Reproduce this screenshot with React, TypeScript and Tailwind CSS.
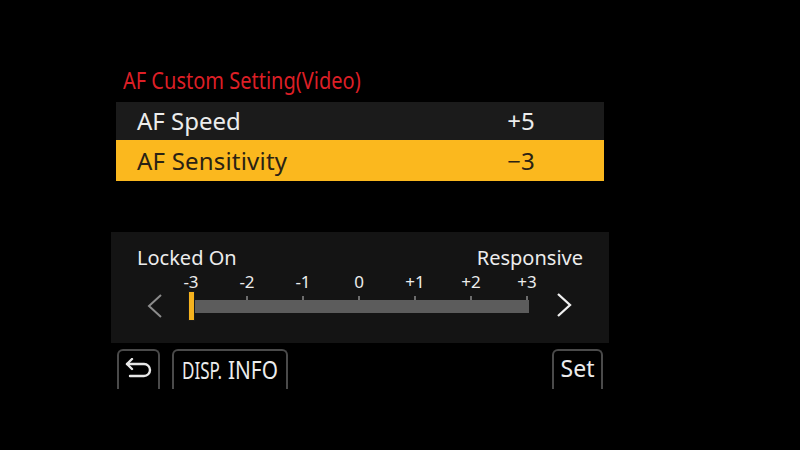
const TICKS = ["-3", "-2", "-1", "0", "+1", "+2", "+3"];

function BackIcon() {
  return (
    <svg viewBox="0 0 30 26" className="mt-[2px] h-[26px] w-[30px]" fill="none" stroke="#e8e8e8" strokeWidth={2.4}>
      <path d="M3 6h17a6 6 0 0 1 0 12H6" strokeLinecap="round" strokeLinejoin="round" />
      <path d="M8 1 3 6l5 5" strokeLinecap="round" strokeLinejoin="round" />
    </svg>
  );
}

function Scale() {
  return (
    <svg viewBox="0 0 350 30" className="h-[30px] w-[350px]">
      <rect x={6} y={9} width={338} height={13} fill="#5c5c5c" />
      {TICKS.map((t, i) => (
        <line key={t} x1={6 + 56 * i} x2={6 + 56 * i} y1={5} y2={9} stroke="#8a8a8a" strokeWidth={1.5} />
      ))}
      <rect x={3.5} y={0.5} width={6} height={29} fill="#f5b21e" stroke="#1a1a1a" strokeWidth={1} />
    </svg>
  );
}

export default function App() {
  return (
    <div className="h-[450px] w-[800px] overflow-hidden bg-black font-['Noto_Sans',sans-serif] text-[#ececec]">
      <div className="ml-[111px] w-[498px] pt-[67px]">
        <div className="ml-[12px] h-[26px] origin-left scale-x-[0.87] text-[23px] leading-[26px] whitespace-nowrap text-[#dc1f26]">
          AF Custom Setting(Video)
        </div>

        <div className="mx-[5px] mt-[9px]">
          <div className="flex h-[38px] items-center bg-[#1b1b1b] text-[24px]">
            <span className="ml-[21px] flex-1">AF Speed</span>
            <span className="mr-[58px] w-[50px] text-center">+5</span>
          </div>
          <div className="flex h-[41px] items-center bg-[#fbb81e] text-[24px] text-[#2a2214]">
            <span className="ml-[21px] flex-1 tracking-[0.2px]">AF Sensitivity</span>
            <span className="mr-[58px] w-[50px] text-center">−3</span>
          </div>
        </div>

        <div className="mt-[51px] h-[111px] bg-[#141414] pt-[14px]">
          <div className="flex h-[24px] justify-between px-[26px] text-[20px] leading-[24px]">
            <span>Locked On</span>
            <span>Responsive</span>
          </div>
          <div className="mt-[3px] flex h-[18px] pl-[52px] text-[17px] leading-[18px]">
            {TICKS.map((t) => (
              <span key={t} className="w-[56px] text-center">
                {t}
              </span>
            ))}
          </div>
          <div className="flex h-[30px] items-center pl-[35px]">
            <svg viewBox="0 0 17 24" className="h-[24px] w-[17px]" fill="none" stroke="#8c8c8c" strokeWidth={2}>
              <path d="M15 1 3 12l12 11" />
            </svg>
            <div className="ml-[22px]">
              <Scale />
            </div>
            <svg viewBox="0 0 17 24" className="mb-[2px] ml-[21px] h-[24px] w-[17px]" fill="none" stroke="#f0f0f0" strokeWidth={2.3}>
              <path d="M2 1l12 11L2 23" />
            </svg>
          </div>
        </div>

        <div className="mt-[6px] flex h-[40px] pl-[6px] pr-[6px]">
          <div className="flex w-[43px] items-center justify-center rounded-t-[6px] border-2 border-b-0 border-[#4a4a4a]">
            <BackIcon />
          </div>
          <div className="ml-[12px] flex w-[116px] items-center rounded-t-[6px] border-2 border-b-0 border-[#4a4a4a] pb-[2px] pl-[8px] whitespace-nowrap">
            <span className="mt-[2px] inline-block origin-left scale-x-[0.74] text-[23px] leading-none">DISP.</span>
            <span className="-ml-[8px] inline-block origin-left scale-x-[0.8] text-[26px] leading-none">INFO</span>
          </div>
          <div className="flex-1" />
          <div className="flex w-[51px] items-center justify-center rounded-t-[6px] border-2 border-b-0 border-[#4a4a4a] pb-[4px] text-[23px] leading-none">
            Set
          </div>
        </div>
      </div>
    </div>
  );
}
